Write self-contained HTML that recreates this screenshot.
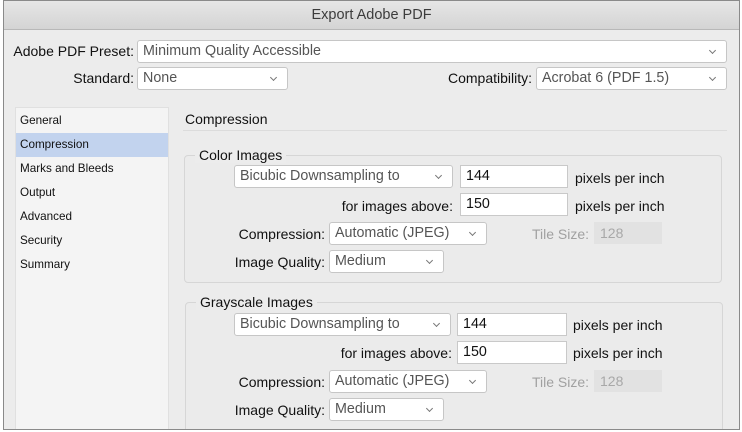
<!DOCTYPE html>
<html><head><meta charset="utf-8"><style>
*{box-sizing:border-box;margin:0;padding:0}
body{width:742px;height:432px;background:#fff;font-family:"Liberation Sans",sans-serif;color:#111;position:relative;overflow:hidden}
.dlg{position:absolute;left:3px;top:0;width:737px;height:430px;border:1px solid #8a8a8a;background:#ececec;overflow:hidden}
.tb{position:absolute;left:0;top:0;width:100%;height:29px;background:linear-gradient(#e6e6e6,#d4d4d4);border-bottom:1px solid #b8b8b8;text-align:center;font-size:14.5px;line-height:29px;color:#3c3c3c}
.a{position:absolute;font-size:14px;white-space:nowrap;line-height:16px}
.r{text-align:right}
.box{position:absolute;background:#fff;border:1px solid #c6c6c6;border-radius:3px;font-size:14.3px;color:#555;padding-left:5px;line-height:21px;white-space:nowrap}
.sel::after{content:"";position:absolute;right:11px;top:7px;width:4px;height:4px;border-right:1px solid #777;border-bottom:1px solid #777;transform:rotate(45deg)}
.inp{color:#111;border-radius:0;border-color:#c9c9c9}
.dis{position:absolute;background:#e2e2e2;color:#a8a8a8;font-size:14px;padding-left:6px;line-height:22px}
.grp{position:absolute;border:1px solid #d6d6d6;border-radius:4px;background:#ebebeb}
.gt{position:absolute;background:#ececec;padding:0 4px;font-size:14px;line-height:16px}
.list{position:absolute;left:11px;top:106px;width:154px;height:330px;background:#f4f4f4;border:1px solid #e0e0e0}
.li{position:absolute;left:4px;font-size:11.7px}
</style></head><body>
<div class="dlg">
<div class="tb">Export Adobe PDF</div>
<div class="list">
<div style="position:absolute;left:0;top:25px;width:152px;height:24px;background:#c2d3ee"></div>
<div class="a li" style="top:5px">General</div>
<div class="a li" style="top:29px">Compression</div>
<div class="a li" style="top:53px">Marks and Bleeds</div>
<div class="a li" style="top:77px">Output</div>
<div class="a li" style="top:101px">Advanced</div>
<div class="a li" style="top:125px">Security</div>
<div class="a li" style="top:149px">Summary</div>
</div>
<div class="grp" style="left:181px;top:301px;width:538px;height:140px"></div>
<div class="gt" style="left:192px;top:293px">Grayscale Images</div>
</div>
<div class="a r" style="left:0;width:134px;top:43px">Adobe PDF Preset:</div>
<div class="box sel" style="left:137px;top:40px;width:590px;height:23px">Minimum Quality Accessible</div>
<div class="a r" style="left:0;width:134px;top:70px">Standard:</div>
<div class="box sel" style="left:137px;top:67px;width:151px;height:23px">None</div>
<div class="a r" style="left:400px;width:132px;top:70px">Compatibility:</div>
<div class="box sel" style="left:536px;top:67px;width:191px;height:23px">Acrobat 6 (PDF 1.5)</div>

<div class="a" style="left:185px;top:111px;font-size:14px">Compression</div>
<div style="position:absolute;left:183px;top:130px;width:544px;height:1px;background:#dcdcdc"></div>

<div class="grp" style="left:184px;top:155px;width:538px;height:128px"></div>
<div class="gt" style="left:195px;top:147px">Color Images</div>
<div class="box sel" style="left:234px;top:165px;width:219px;height:23px">Bicubic Downsampling to</div>
<div class="box inp" style="left:460px;top:165px;width:108px;height:23px">144</div>
<div class="a" style="left:575px;top:170px">pixels per inch</div>
<div class="a r" style="left:250px;width:203px;top:198px">for images above:</div>
<div class="box inp" style="left:460px;top:193px;width:108px;height:23px">150</div>
<div class="a" style="left:575px;top:198px">pixels per inch</div>
<div class="a r" style="left:200px;width:125px;top:226px">Compression:</div>
<div class="box sel" style="left:329px;top:222px;width:158px;height:23px">Automatic (JPEG)</div>
<div class="a" style="left:532px;top:226px;color:#a0a0a0">Tile Size:</div>
<div class="dis" style="left:594px;top:222px;width:68px;height:22px">128</div>
<div class="a r" style="left:200px;width:125px;top:254px">Image Quality:</div>
<div class="box sel" style="left:329px;top:250px;width:115px;height:23px">Medium</div>

<div class="box sel" style="left:234px;top:313px;width:217px;height:23px">Bicubic Downsampling to</div>
<div class="box inp" style="left:457px;top:313px;width:110px;height:23px">144</div>
<div class="a" style="left:573px;top:317px">pixels per inch</div>
<div class="a r" style="left:250px;width:202px;top:345px">for images above:</div>
<div class="box inp" style="left:457px;top:341px;width:110px;height:23px">150</div>
<div class="a" style="left:573px;top:345px">pixels per inch</div>
<div class="a r" style="left:200px;width:125px;top:374px">Compression:</div>
<div class="box sel" style="left:329px;top:370px;width:158px;height:23px">Automatic (JPEG)</div>
<div class="a" style="left:532px;top:374px;color:#a0a0a0">Tile Size:</div>
<div class="dis" style="left:594px;top:370px;width:68px;height:22px">128</div>
<div class="a r" style="left:200px;width:125px;top:402px">Image Quality:</div>
<div class="box sel" style="left:329px;top:398px;width:115px;height:23px">Medium</div>
</body></html>
